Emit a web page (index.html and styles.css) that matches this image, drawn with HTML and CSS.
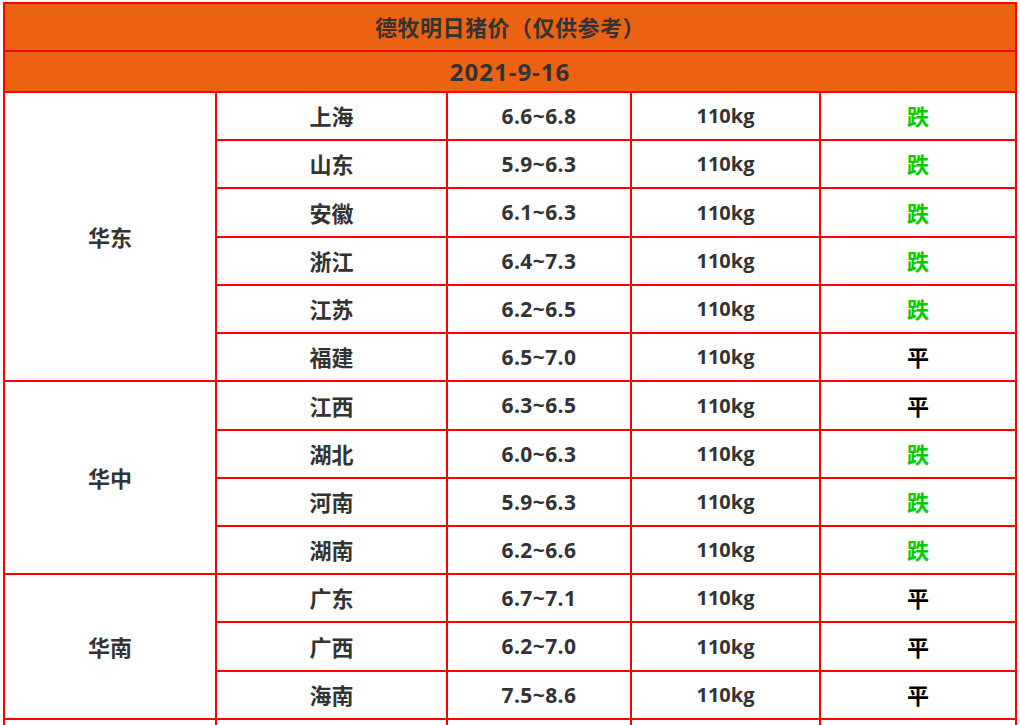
FILE: index.html
```html
<!DOCTYPE html>
<html lang="zh-CN">
<head>
<meta charset="utf-8">
<title>德牧明日猪价</title>
<link rel="stylesheet" href="styles.css">
</head>
<body>
<div class="wrap">
<table class="price">
  <colgroup>
    <col class="c1"><col class="c2"><col class="c3"><col class="c4"><col class="c5">
  </colgroup>
  <tbody>
    <tr class="head h1"><td colspan="5" class="title">德牧明日猪价（仅供参考）</td></tr>
    <tr class="head h2"><td colspan="5" class="date">2021-9-16</td></tr>

    <tr class="r"><td rowspan="6">华东</td><td>上海</td><td class="num">6.6~6.8</td><td class="wt">110kg</td><td class="down">跌</td></tr>
    <tr class="r"><td>山东</td><td class="num">5.9~6.3</td><td class="wt">110kg</td><td class="down">跌</td></tr>
    <tr class="r t"><td>安徽</td><td class="num">6.1~6.3</td><td class="wt">110kg</td><td class="down">跌</td></tr>
    <tr class="r"><td>浙江</td><td class="num">6.4~7.3</td><td class="wt">110kg</td><td class="down">跌</td></tr>
    <tr class="r"><td>江苏</td><td class="num">6.2~6.5</td><td class="wt">110kg</td><td class="down">跌</td></tr>
    <tr class="r"><td>福建</td><td class="num">6.5~7.0</td><td class="wt">110kg</td><td class="flat">平</td></tr>

    <tr class="r t"><td rowspan="4">华中</td><td>江西</td><td class="num">6.3~6.5</td><td class="wt">110kg</td><td class="flat">平</td></tr>
    <tr class="r"><td>湖北</td><td class="num">6.0~6.3</td><td class="wt">110kg</td><td class="down">跌</td></tr>
    <tr class="r"><td>河南</td><td class="num">5.9~6.3</td><td class="wt">110kg</td><td class="down">跌</td></tr>
    <tr class="r"><td>湖南</td><td class="num">6.2~6.6</td><td class="wt">110kg</td><td class="down">跌</td></tr>

    <tr class="r"><td rowspan="3">华南</td><td>广东</td><td class="num">6.7~7.1</td><td class="wt">110kg</td><td class="flat">平</td></tr>
    <tr class="r t"><td>广西</td><td class="num">6.2~7.0</td><td class="wt">110kg</td><td class="flat">平</td></tr>
    <tr class="r"><td>海南</td><td class="num">7.5~8.6</td><td class="wt">110kg</td><td class="flat">平</td></tr>

    <tr class="r"><td></td><td></td><td></td><td></td><td></td></tr>
  </tbody>
</table>
</div>
</body>
</html>
```
FILE: styles.css
```css
html, body {
  margin: 0;
  padding: 0;
  background: #ffffff;
}

.wrap {
  padding: 2px 0 0 3px;
}

.price {
  border-collapse: separate;
  border-spacing: 0;
  border-left: 2px solid #ff0000;
  border-top: 2px solid #ff0000;
  table-layout: fixed;
  width: 1014px;
  font-family: "Open Sans", "Noto Sans CJK SC", sans-serif;
  font-weight: 700;
  color: #333333;
}

.c1 { width: 212px; }
.c2 { width: 231px; }
.c3 { width: 184px; }
.c4 { width: 189px; }
.c5 { width: 196px; }

.price td {
  border-right: 2px solid #ff0000;
  border-bottom: 2px solid #ff0000;
  padding: 0;
  text-align: center;
  vertical-align: middle;
  box-sizing: border-box;
  font-size: 22px;
  line-height: 1;
}

.head td {
  background: #eb6213;
  font-size: 22px;
}

.price td.title {
  letter-spacing: 0.5px;
}

.price td.date {
  font-size: 24px;
  letter-spacing: 1px;
}

.h1 td { height: 48px; }
.h2 td { height: 41px; }

.r td { height: 48px; }
.r.t td { height: 49px; }

.price td.num {
  font-size: 21px;
  letter-spacing: 0.4px;
}

.price td.wt {
  font-size: 20px;
}

.price td.down {
  color: #00cc00;
}

.price td.flat {
  color: #000000;
}
```
